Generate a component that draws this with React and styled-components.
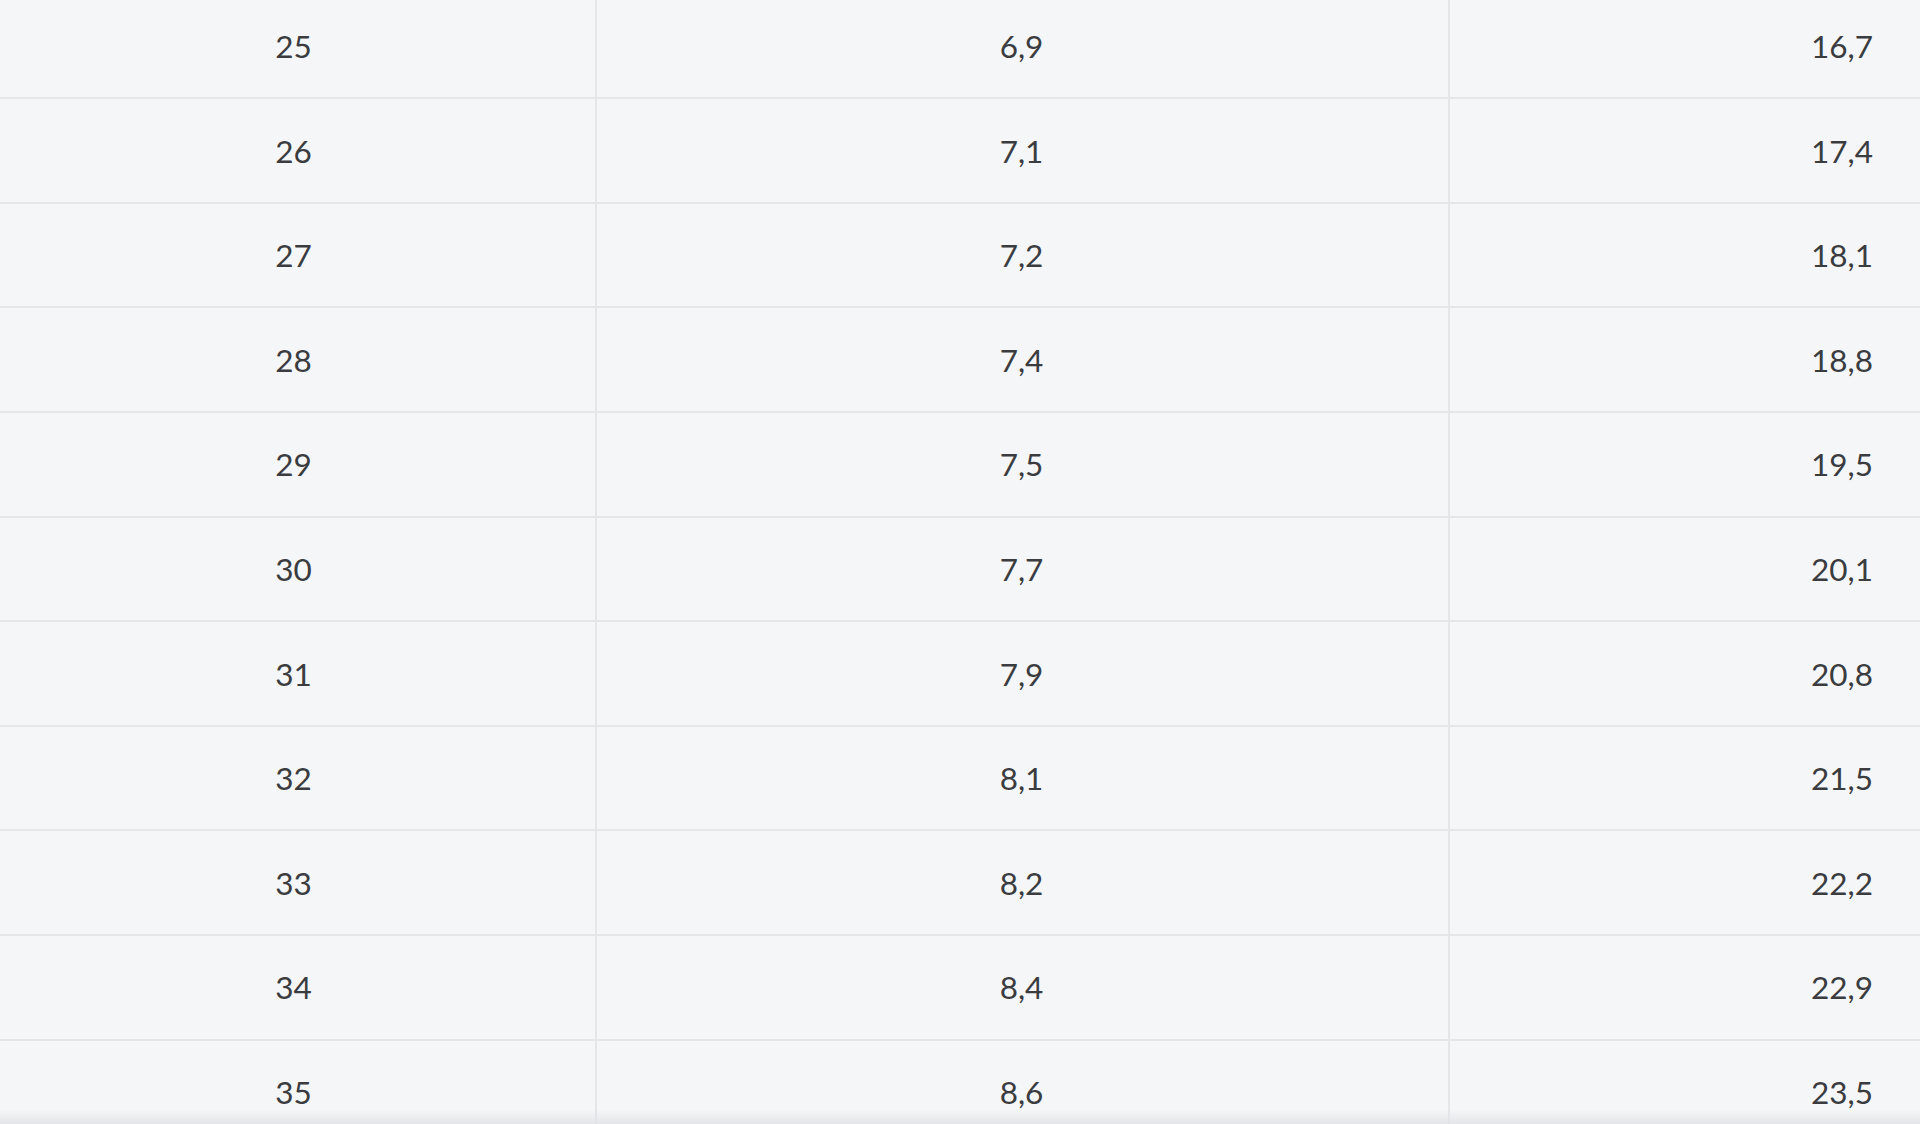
import React from "react";
import styled, { createGlobalStyle } from "styled-components";

const rows = [
	["25", "6,9", "16,7"],
	["26", "7,1", "17,4"],
	["27", "7,2", "18,1"],
	["28", "7,4", "18,8"],
	["29", "7,5", "19,5"],
	["30", "7,7", "20,1"],
	["31", "7,9", "20,8"],
	["32", "8,1", "21,5"],
	["33", "8,2", "22,2"],
	["34", "8,4", "22,9"],
	["35", "8,6", "23,5"],
];

export default function App() {
	return (
		<>
			<GlobalStyle />
			<Page>
				<Table>
					{rows.map((r, i) => (
						<Row key={i}>
							<Cell $align="center" $pr={8}>{r[0]}</Cell>
							<Cell $align="center" $pr={2} $divider>{r[1]}</Cell>
							<Cell $align="right" $pr={47} $divider>{r[2]}</Cell>
						</Row>
					))}
				</Table>
				<BottomShade />
			</Page>
		</>
	);
}

const GlobalStyle = createGlobalStyle`
	html, body {
		margin: 0;
		padding: 0;
		background: #f5f6f8;
	}
	body {
		font-family: Lato, "Open Sans", sans-serif;
	}
`;

const Page = styled.div`
	position: relative;
	width: 1920px;
	height: 1124px;
	overflow: hidden;
	background: #f5f6f8;
`;

// table scrolled a few px past the top of the first row
const Table = styled.div`
	display: flex;
	flex-direction: column;
	margin-top: -5.4px;
`;

const Row = styled.div`
	display: grid;
	grid-template-columns: 595px 853px 1fr;
	height: 104.6px;
	box-sizing: border-box;
	border-bottom: 2px solid #e4e6e9;
`;

const Cell = styled.div`
	display: flex;
	align-items: center;
	justify-content: ${(p) => (p.$align === "right" ? "flex-end" : "center")};
	padding-right: ${(p) => p.$pr || 0}px;
	padding-top: 1.6px;
	box-sizing: border-box;
	border-left: ${(p) => (p.$divider ? "2px solid #e4e6e9" : "none")};
	font-size: 31.5px;
	color: #3a3c3f;
	line-height: 1;
`;

const BottomShade = styled.div`
	position: absolute;
	left: 0;
	right: 0;
	bottom: 0;
	height: 14px;
	background: linear-gradient(to bottom, rgba(225, 227, 230, 0), rgba(225, 227, 230, 0.9));
	pointer-events: none;
`;
